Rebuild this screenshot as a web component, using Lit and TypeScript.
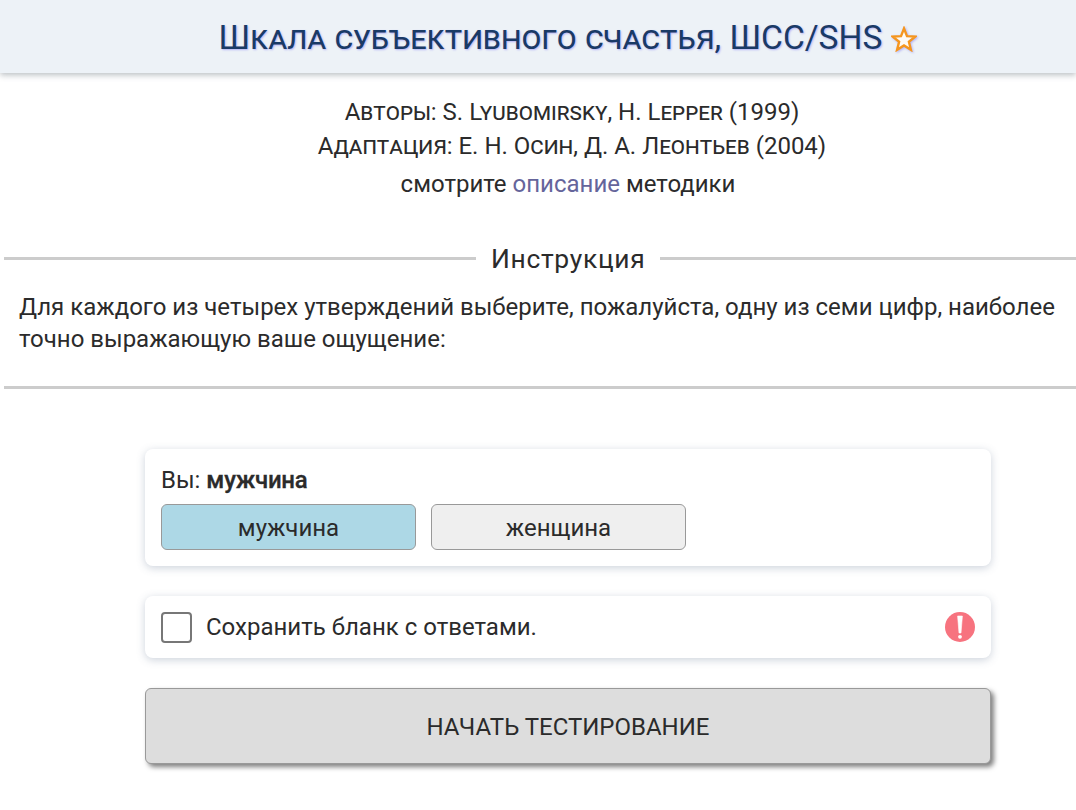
import { LitElement, html, css } from "lit";
import { customElement } from "lit/decorators.js";

@customElement("app-root")
export class AppRoot extends LitElement {
  static styles = css`
    :host { display: block; height: 810px; overflow: hidden; background: #fff; color: #2b2b2b; font-family: Roboto, sans-serif; font-size: 24px; line-height: 32px; }
    header { height: 73px; background: #edf2f7; box-shadow: 0 2px 6px rgba(100,110,120,.45); display: flex; align-items: center; justify-content: center; gap: 9px; padding: 2px 0 0 60px; box-sizing: border-box; }
    h1 { margin: 0; font-size: 33.6px; font-weight: 400; font-variant: small-caps; color: #1a3a66; text-shadow: 1px 1px 2px #b3b3f5; line-height: 40px; }
    .star { display: block; width: 26px; height: 26px; margin-top: 2px; filter: drop-shadow(1px 1px 1px #b3b3f5); }
    .authors { margin-top: 22px; padding-left: 68px; text-align: center; font-variant: small-caps; line-height: 34px; }
    .see { text-align: center; margin-top: 4px; padding-left: 60px; line-height: 34px; }
    .see a { color: #65659b; text-decoration: none; }
    .instr { margin: 41px 0 0 4px; border-bottom: 3px solid #ccc; padding-bottom: 31px; }
    .legend { display: flex; align-items: center; gap: 15px; font-size: 26.4px; line-height: 32px; letter-spacing: .7px; }
    .legend span { padding-top: 1px; margin-bottom: -1px; }
    .legend i { flex: 1; height: 3px; background: #ccc; }
    .legend i:first-child { flex: none; width: 472px; }
    .instr p { margin: 17px 15px 0; }
    main { width: 846px; margin: 60px 0 0 145px; display: flex; flex-direction: column; gap: 30px; }
    .card { background: #fff; border-radius: 8px; box-shadow: 0 2px 8px rgba(90,110,140,.3); padding: 16px; }
    .you { line-height: 28px; margin-bottom: 11px; padding-top: 1px; height: 27px; }
    .you b { font-weight: 500; letter-spacing: -.25px; -webkit-text-stroke: .3px #2b2b2b; }
    .choices { display: flex; gap: 15px; }
    .choice { width: 255px; height: 46px; box-sizing: border-box; border: 1px solid #999; border-radius: 6px; background: #efefef; display: flex; align-items: center; justify-content: center; padding-top: 2px; }
    .choice.on { background: #add8e6; }
    .save { display: flex; align-items: center; gap: 14px; padding: 15px 16px; height: 62px; box-sizing: border-box; }
    .box { width: 31px; height: 31px; box-sizing: border-box; border: 2px solid #777; border-radius: 4px; }
    .save span { flex: 1; }
    .alert { display: block; width: 30px; height: 30px; }
    .start { height: 76px; box-sizing: border-box; border: 1px solid #999; border-radius: 6px; background: #ddd; box-shadow: 3px 3px 5px rgba(0,0,0,.5); display: flex; align-items: center; justify-content: center; padding-top: 2px; }
  `;
  render() {
    return html`
      <header>
        <h1>Шкала субъективного счастья, ШСС/SHS</h1>
        <svg class="star" viewBox="0 0 26 26"><path d="M13 2.5l3 7.6 8.2.5-6.3 5.2 2 8-6.9-4.4-6.9 4.4 2-8-6.3-5.2 8.2-.5z" fill="#fdfaf5" stroke="#f5961e" stroke-width="2.4" stroke-linejoin="miter"/></svg>
      </header>
      <div class="authors">Авторы: S. Lyubomirsky, H. Lepper (1999)<br />Адаптация: Е. Н. Осин, Д. А. Леонтьев (2004)</div>
      <div class="see">смотрите <a>описание</a> методики</div>
      <section class="instr">
        <div class="legend"><i></i><span>Инструкция</span><i></i></div>
        <p>Для каждого из четырех утверждений выберите, пожалуйста, одну из семи цифр, наиболее точно выражающую ваше ощущение:</p>
      </section>
      <main>
        <div class="card">
          <div class="you">Вы: <b>мужчина</b></div>
          <div class="choices"><div class="choice on">мужчина</div><div class="choice">женщина</div></div>
        </div>
        <div class="card save">
          <div class="box"></div><span>Сохранить бланк с ответами.</span>
          <svg class="alert" viewBox="0 0 30 30"><circle cx="15" cy="15" r="15" fill="#f7737f"/><path d="M12.6 4h4.8l-1.4 17h-2z" fill="#fff" stroke="#fff" stroke-width=".6" stroke-linejoin="round"/><circle cx="15" cy="24.8" r="1.9" fill="#fff"/></svg>
        </div>
        <div class="start">НАЧАТЬ ТЕСТИРОВАНИЕ</div>
      </main>
    `;
  }
}
